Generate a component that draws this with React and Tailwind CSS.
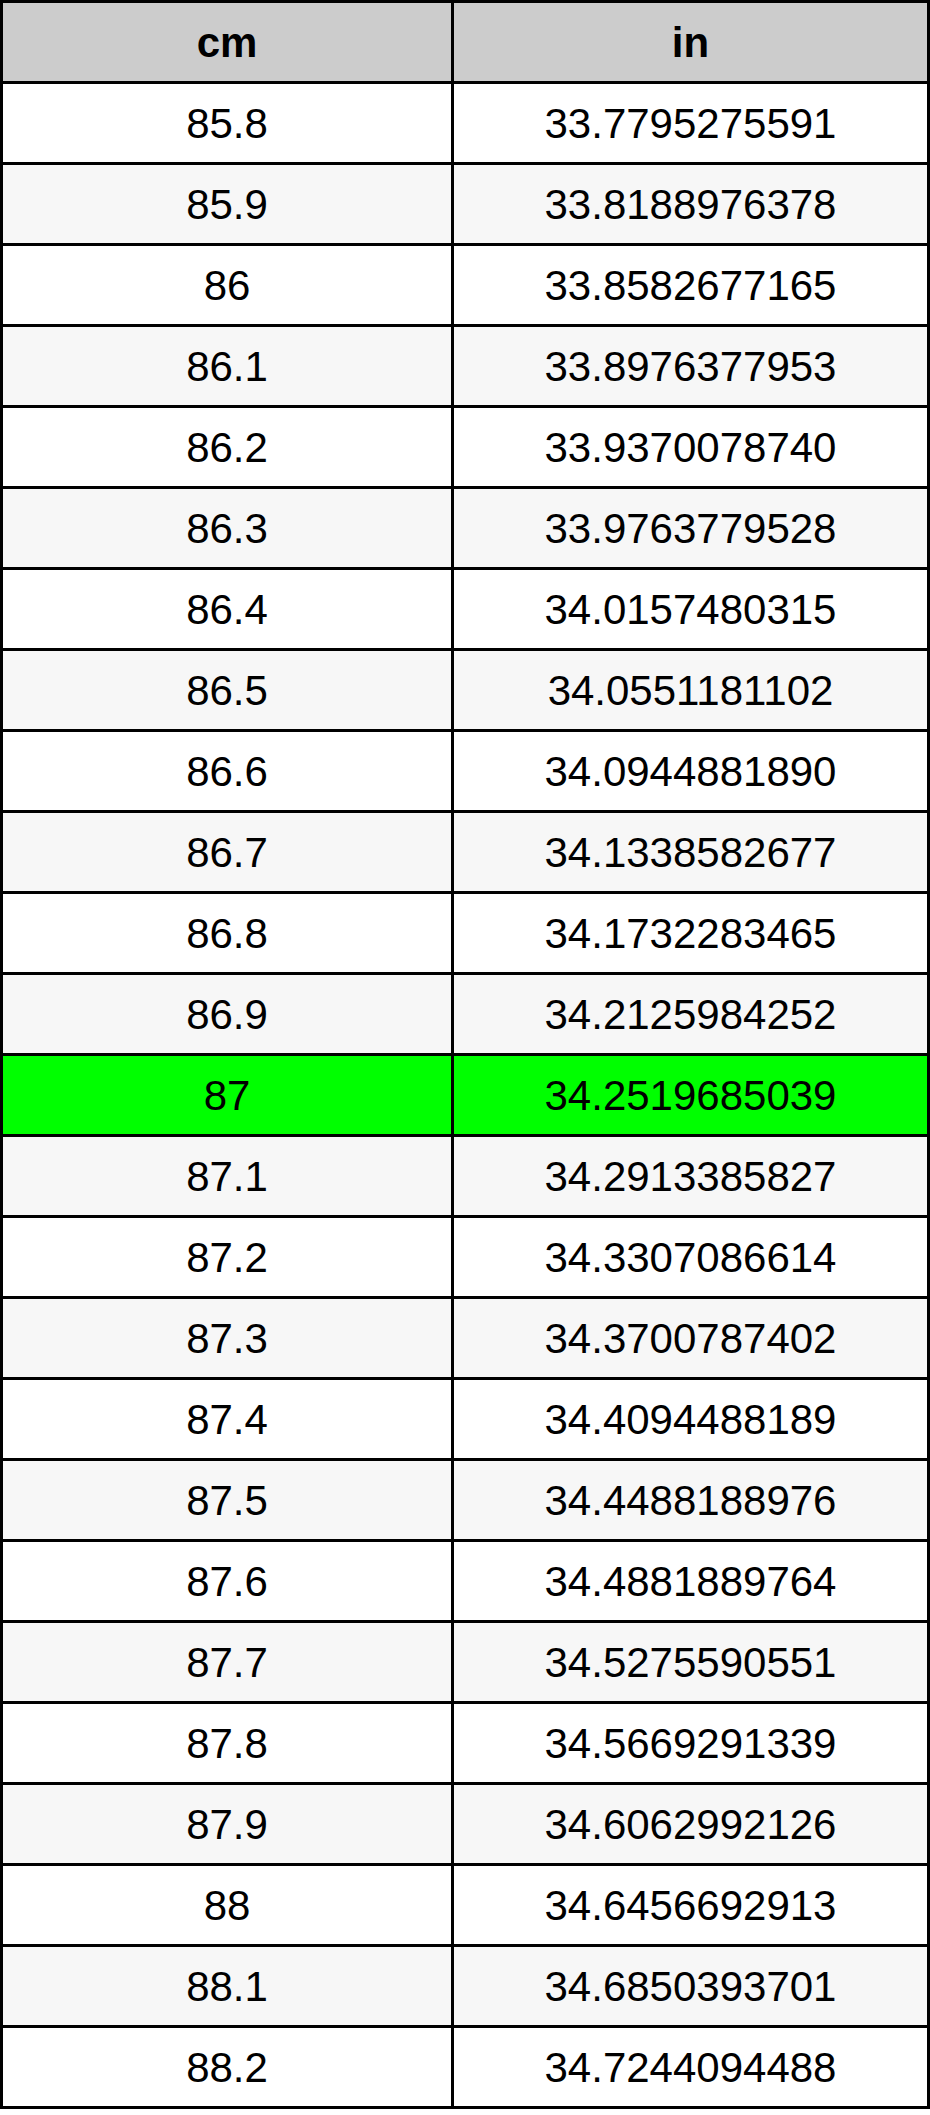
import React from 'react';

const rows = [
  ['85.8', '33.7795275591'],
  ['85.9', '33.8188976378'],
  ['86', '33.8582677165'],
  ['86.1', '33.8976377953'],
  ['86.2', '33.9370078740'],
  ['86.3', '33.9763779528'],
  ['86.4', '34.0157480315'],
  ['86.5', '34.0551181102'],
  ['86.6', '34.0944881890'],
  ['86.7', '34.1338582677'],
  ['86.8', '34.1732283465'],
  ['86.9', '34.2125984252'],
  ['87', '34.2519685039'],
  ['87.1', '34.2913385827'],
  ['87.2', '34.3307086614'],
  ['87.3', '34.3700787402'],
  ['87.4', '34.4094488189'],
  ['87.5', '34.4488188976'],
  ['87.6', '34.4881889764'],
  ['87.7', '34.5275590551'],
  ['87.8', '34.5669291339'],
  ['87.9', '34.6062992126'],
  ['88', '34.6456692913'],
  ['88.1', '34.6850393701'],
  ['88.2', '34.7244094488'],
];

export default function App() {
  return (
    <div className="w-[930px] bg-white text-black font-['Liberation_Sans',Arial,sans-serif] text-[42px]">
      <div className="border-[3px] border-black">
        {/* header */}
        <div className="flex h-[81px] border-b-[3px] border-black bg-[#cccccc] font-bold">
          <div className="w-[451px] border-r-[3px] border-black flex items-center justify-center">cm</div>
          <div className="flex-1 flex items-center justify-center">in</div>
        </div>

        {rows.map(([cm, inch], i) => {
          const bg = cm === '87' ? 'bg-[#00ff00]' : i % 2 === 0 ? 'bg-white' : 'bg-[#f7f7f7]';
          const last = i === rows.length - 1;
          return (
            <div
              key={cm}
              className={`flex ${last ? 'h-[78px]' : 'h-[81px] border-b-[3px] border-black'} ${bg}`}
            >
              <div className="w-[451px] border-r-[3px] border-black flex items-center justify-center">{cm}</div>
              <div className="flex-1 flex items-center justify-center">{inch}</div>
            </div>
          );
        })}
      </div>
    </div>
  );
}
